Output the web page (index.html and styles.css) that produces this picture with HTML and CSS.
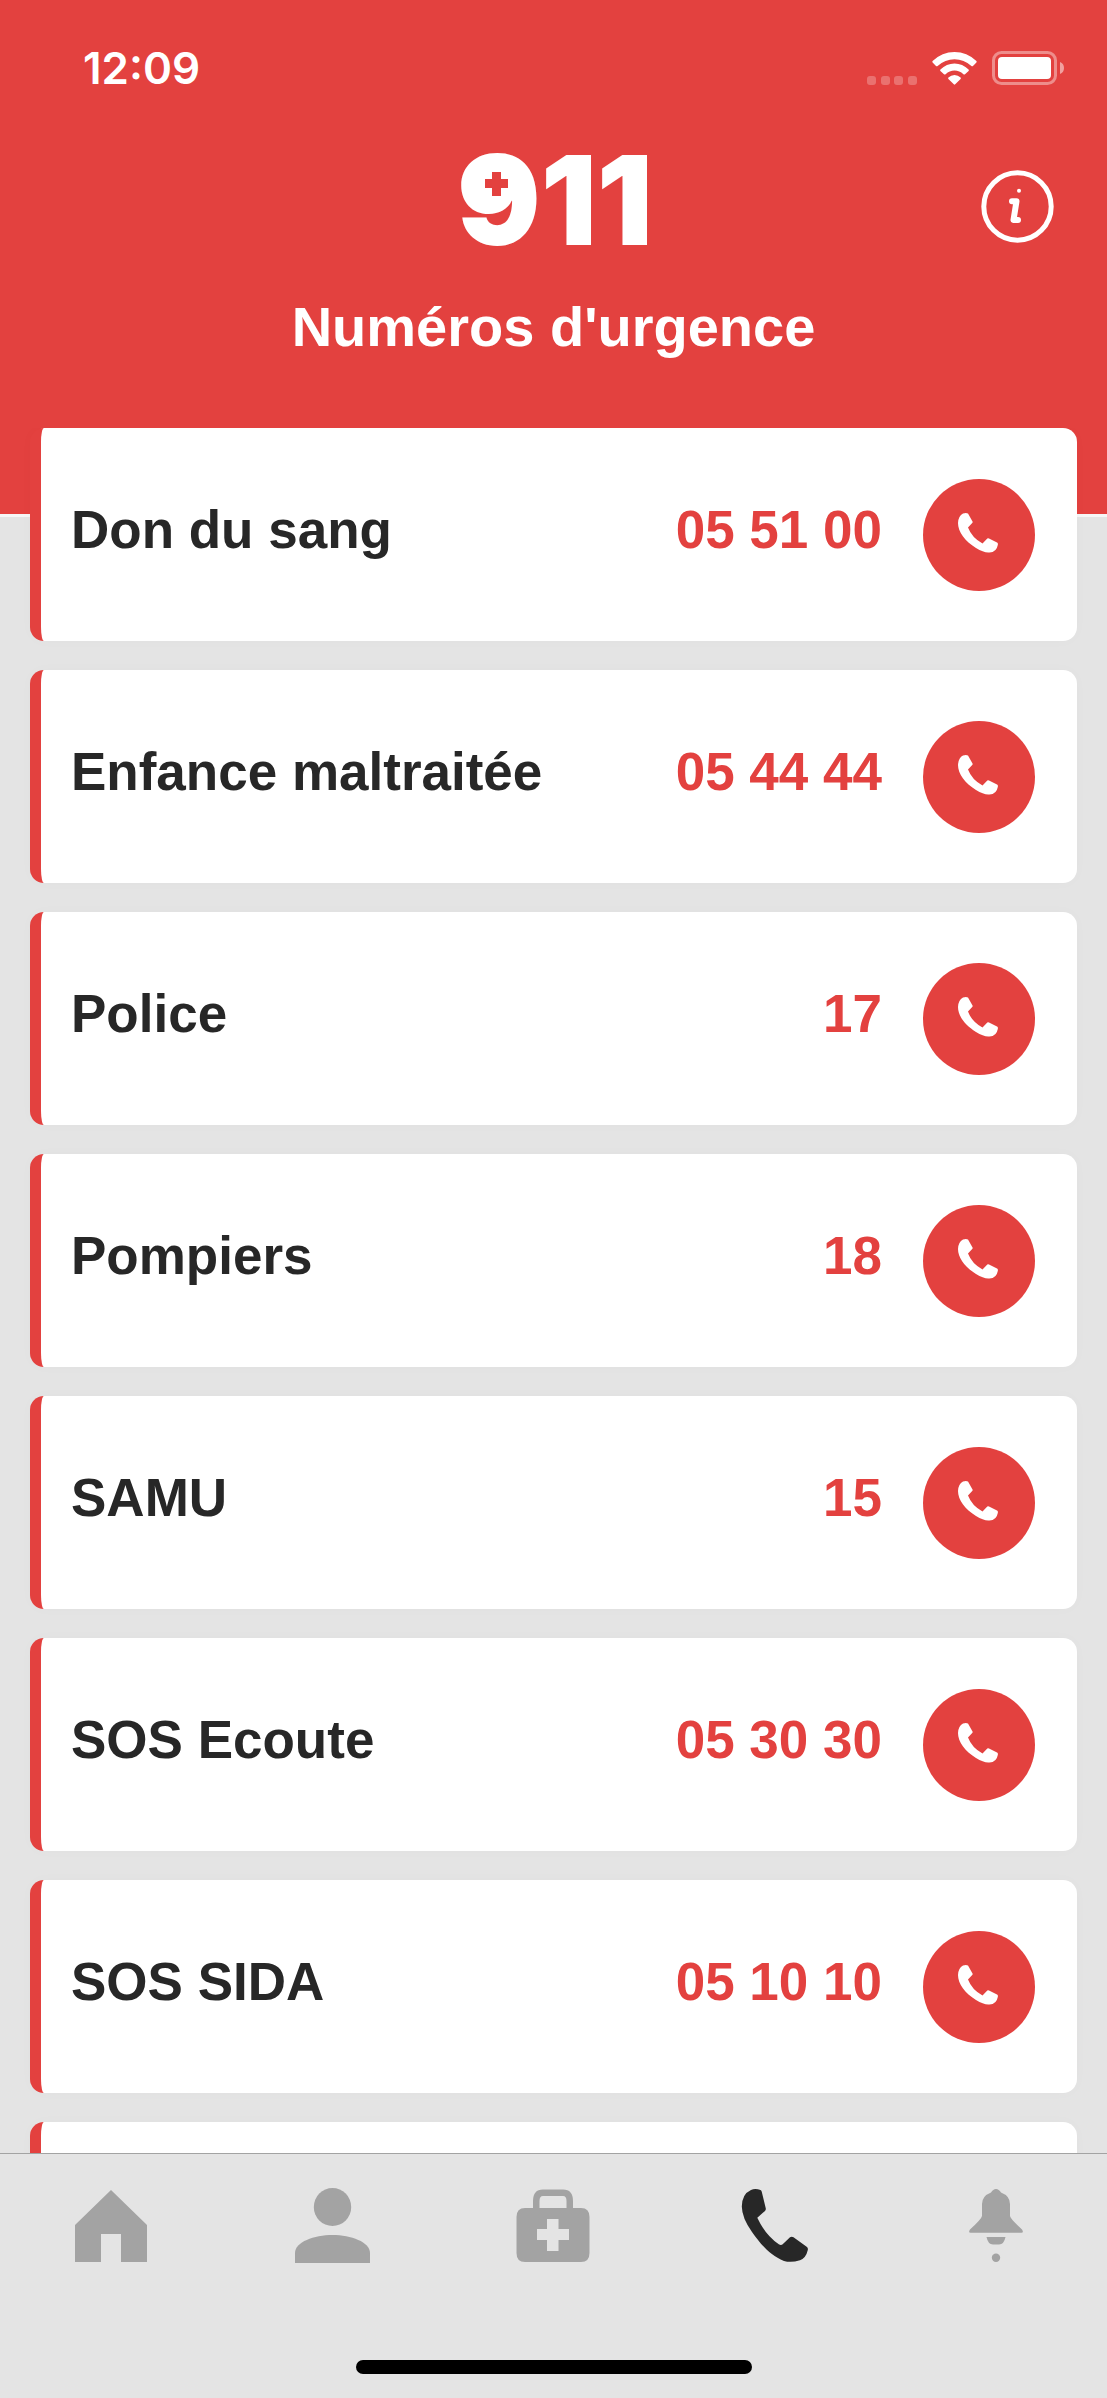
FILE: index.html
```html
<!DOCTYPE html>
<html lang="fr">
<head>
<meta charset="utf-8">
<meta name="viewport" content="width=device-width, initial-scale=1">
<title>Numéros d'urgence</title>
<link rel="stylesheet" href="styles.css">
</head>
<body>
<svg class="defs" aria-hidden="true">
  <symbol id="handset" viewBox="0 0 40 40">
    <path d="M5 .6Q8-.4 10 .5L14.500 8.500Q15 9.300 14.200 10L10 14.600Q14 25 24.500 30.500L29.300 25.600Q30 25 31 25.500L39 29.500Q40.200 30 39.800 32Q38.500 39.300 31.500 39.400Q26 40 18 35C7 28 0 19 0 10Q.4 3 5 .6Z"/>
  </symbol>
</svg>

<header class="header">
  <div class="status">
    <span class="time">12:09</span>
    <div class="status-icons">
      <svg class="signal" width="41" height="33" viewBox="0 0 41 33" aria-hidden="true">
        <rect x="0" y="24" width="9" height="9" rx="3"/><rect x="14" y="24" width="9" height="9" rx="3"/><rect x="27" y="24" width="9" height="9" rx="3"/><rect x="41" y="24" width="9" height="9" rx="3"/>
      </svg>
      <svg class="wifi" width="45" height="33" viewBox="0 0 45 33" aria-hidden="true">
        <path d="M.6 9Q10 0 22.500 0T44.400 9Q45 9.800 44.400 10.500L41 14Q40.200 14.500 39.400 14Q32 7.200 22.500 7.200T5.600 14Q4.800 14.500 4 14L.6 10.500Q0 9.800.6 9Z"/>
        <path d="M8.400 17.500Q14.500 11.500 22.500 11.500T36.600 17.500Q37.200 18.300 36.600 19L33 22.300Q32.200 22.800 31.400 22.200Q27.500 18.500 22.500 18.500T13.600 22.200Q12.800 22.800 12 22.300L8.400 19Q7.800 18.300 8.400 17.500Z"/>
        <path d="M16.400 25.500Q19 23 22.500 23T28.600 25.500Q29.200 26.200 28.600 27L23.200 32.300Q22.500 33 21.800 32.300L16.400 27Q15.800 26.200 16.400 25.500Z"/>
      </svg>
      <svg class="battery" width="72" height="34" viewBox="0 0 72 34" aria-hidden="true">
        <rect class="battery-case" x="1.500" y="1.500" width="62" height="31" rx="8"/>
        <rect x="6" y="6" width="53" height="22" rx="4"/>
        <path class="battery-tip" d="M68 11Q72 12.500 72 17T68 23Z"/>
      </svg>
    </div>
  </div>

  <div class="brand">
    <svg class="logo" width="186" height="96" viewBox="0 0 186 96" role="img" aria-label="911">
      <text class="logo-text" x="-4" y="93">911</text>
      <circle cx="36" cy="32" r="18"/>
      <path class="logo-cross" d="M31 20h9v7h7v9h-7v8h-9v-8h-7v-9h7Z"/>
    </svg>
    <button class="info" type="button" aria-label="Informations">
      <svg width="73" height="73" viewBox="0 0 73 73" aria-hidden="true">
        <circle class="info-line" cx="36.500" cy="36.500" r="33.700"/>
        <path class="info-line info-stem" d="M31 31.200H35.500L32.500 50H37"/>
        <circle cx="38" cy="20.800" r="2"/>
      </svg>
    </button>
  </div>
  <h1 class="title">Numéros d'urgence</h1>
</header>

<main class="content">
  <ul class="list">
    <li class="card"><span class="name">Don du sang</span><span class="number">05 51 00</span><a class="call" href="tel:055100" aria-label="Appeler Don du sang"><svg><use href="#handset"/></svg></a></li>
    <li class="card"><span class="name">Enfance maltraitée</span><span class="number">05 44 44</span><a class="call" href="tel:054444" aria-label="Appeler Enfance maltraitée"><svg><use href="#handset"/></svg></a></li>
    <li class="card"><span class="name">Police</span><span class="number">17</span><a class="call" href="tel:17" aria-label="Appeler Police"><svg><use href="#handset"/></svg></a></li>
    <li class="card"><span class="name">Pompiers</span><span class="number">18</span><a class="call" href="tel:18" aria-label="Appeler Pompiers"><svg><use href="#handset"/></svg></a></li>
    <li class="card"><span class="name">SAMU</span><span class="number">15</span><a class="call" href="tel:15" aria-label="Appeler SAMU"><svg><use href="#handset"/></svg></a></li>
    <li class="card"><span class="name">SOS Ecoute</span><span class="number">05 30 30</span><a class="call" href="tel:053030" aria-label="Appeler SOS Ecoute"><svg><use href="#handset"/></svg></a></li>
    <li class="card"><span class="name">SOS SIDA</span><span class="number">05 10 10</span><a class="call" href="tel:051010" aria-label="Appeler SOS SIDA"><svg><use href="#handset"/></svg></a></li>
    <li class="card"></li>
  </ul>
</main>

<footer class="footer">
  <nav class="tabs">
    <a class="tab" href="#accueil" aria-label="Accueil">
      <svg viewBox="0 0 76 76"><path d="M38 2L74 37V74H48V46H28V74H2V37Z"/></svg>
    </a>
    <a class="tab" href="#profil" aria-label="Profil">
      <svg viewBox="0 0 76 76"><ellipse cx="38.500" cy="19" rx="18.700" ry="19"/><path d="M1 75V65C1 54 20 47 38.500 47S76 54 76 65V75Z"/></svg>
    </a>
    <a class="tab" href="#soins" aria-label="Soins">
      <svg viewBox="0 0 76 76"><path fill-rule="evenodd" d="M18 20V13Q18 1.500 28 1.500H48Q58 1.500 58 13V20H66Q74.500 20 74.500 29V65Q74.500 74 66 74H10Q1.500 74 1.500 65V29Q1.500 20 10 20ZM24.500 20H51.500V13Q51.500 8 48 8H28Q24.500 8 24.500 13ZM32 31V41H22V52H32V63H43.500V52H54V41H43.500V31Z"/></svg>
    </a>
    <a class="tab tab-active" href="#urgences" aria-label="Urgences" aria-current="page">
      <svg viewBox="0 0 76 76"><path d="M14 2Q18 .2 23.500 2Q24.600 2.300 24.800 4L28.800 20.500Q29 22 28 23L20.300 29.700Q28 46.500 41.800 56.300Q44 57.800 45.700 56.300L53 49.300Q54.500 48 56.500 49.300L70 59Q71.200 60 70.800 62Q69 70 63 72.300Q54 75 47 73C33 67 25 58 15 44Q5 30 4.800 18.500Q5 6 14 2Z"/></svg>
    </a>
    <a class="tab" href="#alertes" aria-label="Alertes">
      <svg viewBox="-1 0 76 76"><path d="M37 1Q40 1 42 4.500Q51 8 51 16V28Q51.500 31 63 41.500Q65 44.700 62.500 44.700H11.500Q9 44.700 11 41.500Q22.500 31 23 28V16Q23 8 32 4.500Q34 1 37 1ZM27.500 49H46.500Q45 56.500 40 56.500H34Q29 56.500 27.500 49Z"/><circle cx="37" cy="69.700" r="4.200"/></svg>
    </a>
  </nav>
  <div class="home-bar"></div>
</footer>
</body>
</html>
```
FILE: styles.css
```css
:root {
  --red: #e3413f;
  --ink: #272727;
  --grey: #e4e4e4;
  --muted: #a3a3a3;
}

* {
  box-sizing: border-box;
}

body {
  margin: 0;
  height: 100vh;
  display: flex;
  flex-direction: column;
  overflow: hidden;
  background: var(--grey);
  color: var(--ink);
  font-family: "Liberation Sans", Arial, sans-serif;
}

svg {
  display: block;
  fill: currentColor;
}

.defs {
  position: absolute;
  width: 0;
  height: 0;
}

.header {
  flex: none;
  padding-bottom: 155px;
  border-bottom: 3px solid #f6f6f6;
  background: var(--red);
  color: #fff;
}

.status {
  display: flex;
  align-items: center;
  justify-content: space-between;
  height: 136px;
  padding: 0 43px 0 83px;
}

.time {
  font: 600 44px/56px Inter, sans-serif;
}

.status-icons {
  display: flex;
  align-items: center;
}

.signal {
  overflow: visible;
  margin-right: 24px;
  opacity: 0.25;
}

.wifi {
  margin-right: 15px;
}

.battery-case {
  fill: none;
  stroke: #fff;
  stroke-width: 3;
  opacity: 0.4;
}

.battery-tip {
  opacity: 0.5;
}

.brand {
  display: grid;
  grid-template-columns: 1fr auto 1fr;
  align-items: center;
  height: 109px;
  margin-top: 16px;
  padding: 0 53px;
}

.logo {
  grid-column: 2;
  align-self: start;
  overflow: visible;
}

.logo-text {
  font: 900 124px Inter, sans-serif;
}

.logo-cross {
  fill: var(--red);
}

.info {
  justify-self: end;
  padding: 0;
  border: 0;
  background: none;
  color: #fff;
}

.info-line {
  fill: none;
  stroke: currentColor;
  stroke-width: 5;
}

.info-stem {
  stroke-width: 6;
  stroke-linecap: round;
  stroke-linejoin: round;
}

.title {
  margin: 34px 0 0;
  font-size: 56px;
  line-height: 64px;
  font-weight: 700;
  text-align: center;
}

.content {
  position: relative;
  flex: 1;
  min-height: 0;
  margin-top: -89px;
  overflow: hidden auto;
  scrollbar-width: none;
}

.list {
  display: flex;
  flex-direction: column;
  gap: 29px;
  margin: 0;
  padding: 0 30px;
  list-style: none;
}

.card {
  display: flex;
  align-items: center;
  min-height: 213px;
  padding: 0 42px 0 30px;
  border-left: 11px solid var(--red);
  border-radius: 14px;
  background: #fff;
  box-shadow: 0 0 14px rgba(0, 0, 0, 0.02);
  font-size: 53px;
  line-height: 60px;
  font-weight: 700;
}

.name,
.number {
  padding-bottom: 10px;
}

.name {
  flex: 1;
}

.number {
  margin-right: 41px;
  color: var(--red);
}

.call {
  display: flex;
  align-items: center;
  justify-content: center;
  width: 112px;
  height: 112px;
  padding: 0 2px 4px 0;
  border-radius: 50%;
  background: var(--red);
  color: #fff;
}

.call svg {
  width: 40px;
  height: 40px;
}

.footer {
  position: relative;
  flex: none;
  padding: 34px 0 24px;
  border-top: 1px solid var(--muted);
  background: var(--grey);
}

.tabs {
  display: grid;
  grid-template-columns: repeat(5, 1fr);
}

.tab {
  display: flex;
  justify-content: center;
  color: var(--muted);
}

.tab svg {
  width: 76px;
  height: 76px;
}

.tab-active {
  color: var(--ink);
}

.home-bar {
  width: 396px;
  height: 14px;
  margin: 96px auto 0;
  border-radius: 7px;
  background: #000;
}
```
